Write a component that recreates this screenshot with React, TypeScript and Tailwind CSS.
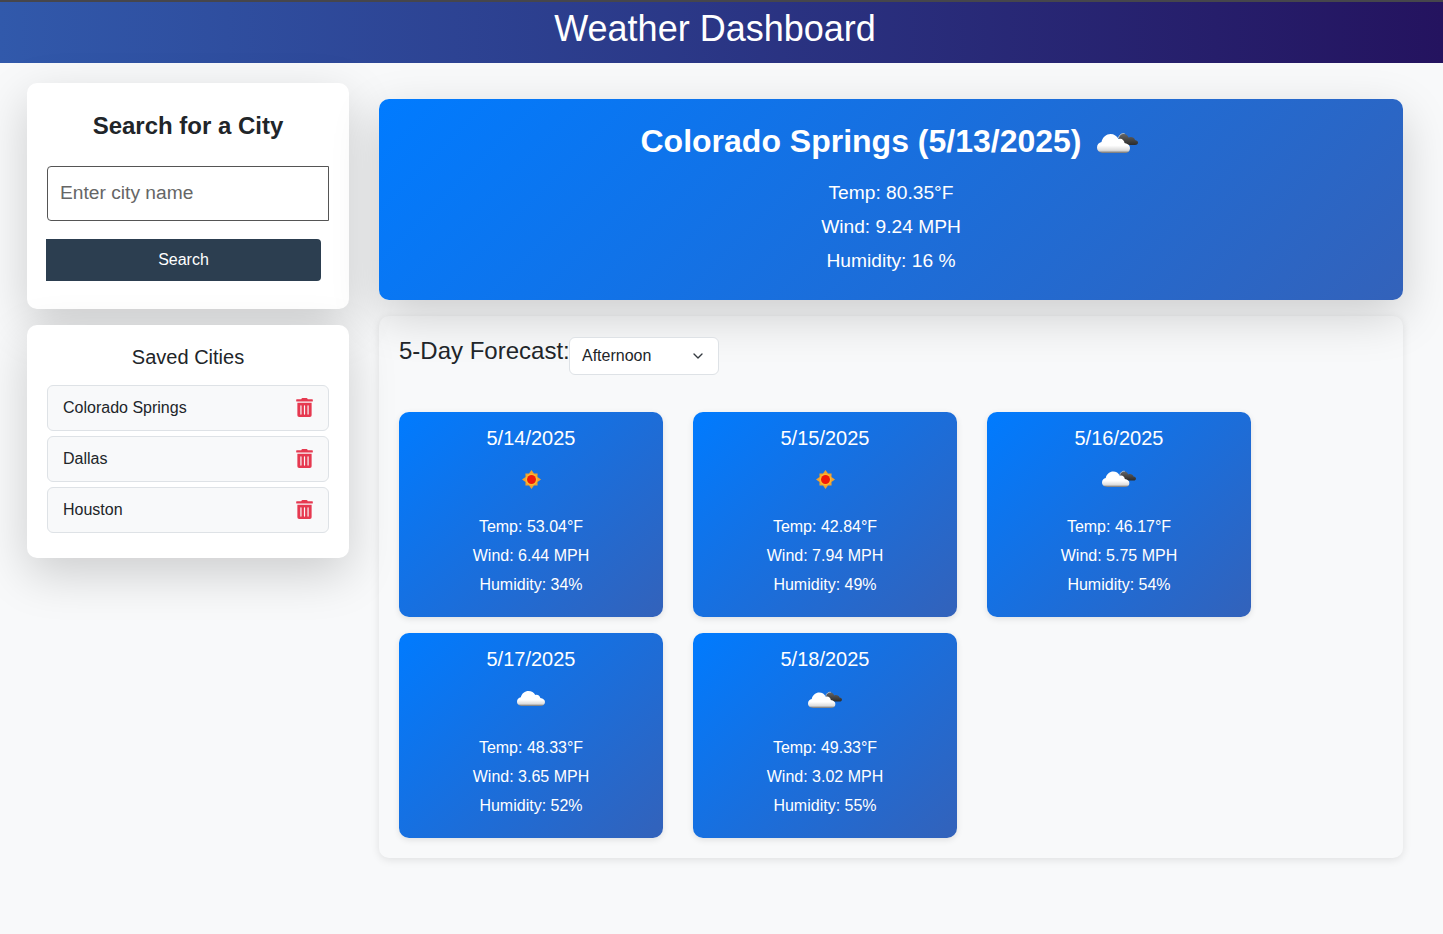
import { FaTrashAlt } from "react-icons/fa"
import { ChevronDown } from "lucide-react"

const Sun = () => (
  <svg width={19} height={19} viewBox="0 0 20 20">
    <polygon
      points="10,0 12.6,3.7 16.4,3.6 16.3,7.4 20,10 16.3,12.6 16.4,16.4 12.6,16.3 10,20 7.4,16.3 3.6,16.4 3.7,12.6 0,10 3.7,7.4 3.6,3.6 7.4,3.7"
      fill="#f0a030"
    />
    <circle cx="10" cy="10" r="6.2" fill="#fbb92f" />
    <circle cx="10" cy="10" r="4.7" fill="#f0190a" />
  </svg>
)

const WHITE_CLOUD =
  "M6.5 21C2.5 21 0 18.5 0 15.5C0 12.5 2 10.5 4.5 10C5.5 5 9.5 2 13.5 2C17 2 20 4 21.5 7C23 6.5 25 6.7 26 8C27 9 27.5 10 27.5 11C31 11.5 33 13.5 33 16C33 19 31 21 28 21Z"

const CloudGradients = () => (
  <defs>
    <linearGradient id="cloudFill" x1="0" y1="0" x2="0" y2="1">
      <stop offset="0.6" stopColor="#ffffff" />
      <stop offset="0.86" stopColor="#dcdcdc" />
      <stop offset="1" stopColor="#6f6f6f" />
    </linearGradient>
    <linearGradient id="darkFill" x1="0" y1="0" x2="0" y2="1">
      <stop offset="0" stopColor="#666666" />
      <stop offset="1" stopColor="#2b2b2b" />
    </linearGradient>
  </defs>
)

// plain white cloud, the 03d icon
const Cloud = () => (
  <svg width={28} height={15} viewBox="0 2 33 19" preserveAspectRatio="none" className="mb-[4px]">
    <CloudGradients />
    <path d={WHITE_CLOUD} fill="url(#cloudFill)" />
  </svg>
)

// white cloud with the dark one behind, the 04d icon
const BrokenCloud = ({ w = 34, h = 17, className = "" }: { w?: number; h?: number; className?: string }) => (
  <svg width={w} height={h} viewBox="0 0 41 21" preserveAspectRatio="none" className={className}>
    <CloudGradients />
    <path d="M22 13V6C22 3 25 1 28 2C30 3 31 4 31.5 5.5C34 4 37.5 5.5 38 8C40 8.3 41 9.5 41 10.5C41 12 40 13 38 13Z" fill="url(#darkFill)" />
    <path d="M21.5 6C22 3 25 1 27.5 1.6" fill="none" stroke="#c8c8c8" strokeWidth="1" />
    <path d={WHITE_CLOUD} fill="url(#cloudFill)" />
  </svg>
)

const data = [
  { date: "5/14/2025", icon: <Sun />, temp: "53.04", wind: "6.44", hum: "34" },
  { date: "5/15/2025", icon: <Sun />, temp: "42.84", wind: "7.94", hum: "49" },
  { date: "5/16/2025", icon: <BrokenCloud className="mb-px" />, temp: "46.17", wind: "5.75", hum: "54" },
  { date: "5/17/2025", icon: <Cloud />, temp: "48.33", wind: "3.65", hum: "52" },
  { date: "5/18/2025", icon: <BrokenCloud className="mb-px" />, temp: "49.33", wind: "3.02", hum: "55" },
]

const cities = ["Colorado Springs", "Dallas", "Houston"]

const App = () => {
  return (
    <div className="min-h-[934px] bg-[#f8f9fa] font-['Liberation_Sans',Arial,sans-serif] text-[#212529]">
      <header className="h-[63px] border-t-2 border-[#46464c] bg-[linear-gradient(90deg,#3159ab,#24135f)] text-center text-[36px] leading-[54px] text-white">
        <span className="relative right-[6.5px]">Weather Dashboard</span>
      </header>
      <div className="flex gap-[30px] pl-[27px] pr-[40px]">
        <aside className="flex w-[322px] shrink-0 flex-col gap-4 pt-5">
          <div className="h-[226px] rounded-[10px] bg-white px-5 pt-[27px] shadow-[0_16px_48px_rgba(0,0,0,0.175)]">
            <h2 className="text-center text-[24px] font-bold leading-[32px]">Search for a City</h2>
            <input
              placeholder="Enter city name"
              className="mt-[24px] h-[55px] w-full rounded-l-[4px] border border-[#555555] px-3 pb-[2px] text-[19.2px] outline-none placeholder:text-[#666666]"
            />
            <button className="-ml-px mt-[18px] block h-[42px] w-[275px] rounded-r-[4px] bg-[#2c3e50] text-center text-[16px] text-white">
              Search
            </button>
          </div>
          <div className="h-[233px] rounded-[10px] bg-white px-5 pt-[20px] shadow-[0_16px_48px_rgba(0,0,0,0.175)]">
            <h3 className="text-center text-[20px] leading-[24px]">Saved Cities</h3>
            <ul className="mt-4 flex flex-col gap-[5px]">
              {cities.map((city) => (
                <li key={city} className="flex h-[46px] items-center justify-between rounded-[6px] border border-[#dee2e6] bg-[#f8f9fa] pl-[15px] pr-[15px] text-[16px]">
                  <span>{city}</span>
                  <FaTrashAlt className="mb-[2px] h-[19px] w-[17px] text-[#e63950]" />
                </li>
              ))}
            </ul>
          </div>
        </aside>
        <main className="min-w-0 flex-1 pt-9 pb-[76px]">
          <section className="h-[201px] rounded-[10px] bg-[linear-gradient(135deg,#007bff,#3362ba)] pt-[19px] text-center text-white shadow-[0_16px_48px_rgba(0,0,0,0.175)]">
            <div className="flex h-[46px] items-center justify-center gap-[15px]">
              <h2 className="text-[32px] font-bold leading-[46px]">Colorado Springs (5/13/2025)</h2>
              <BrokenCloud w={41} h={21} className="mr-[4px] mt-[3px]" />
            </div>
            <div className="mt-[12px] flex flex-col text-[19.2px] leading-[34px]">
              <p>Temp: 80.35°F</p>
              <p>Wind: 9.24 MPH</p>
              <p>Humidity: 16 %</p>
            </div>
          </section>
          <section className="mt-4 h-[542px] rounded-[10px] p-5 shadow-[0_2px_8px_rgba(0,0,0,0.1)]">
            <div className="flex h-[59px] items-start">
              <h3 className="w-[170px] shrink-0 text-[24px] leading-[29px] whitespace-nowrap">5-Day Forecast:</h3>
              <div className="mt-px flex h-[38px] w-[150px] items-center justify-between rounded-[6px] border border-[#dee2e6] bg-white pl-3 pr-[12px] text-[16px] leading-6">
                <span>Afternoon</span>
                <ChevronDown className="h-4 w-4 text-[#343a40]" strokeWidth={2} />
              </div>
            </div>
            <div className="mt-[17px] grid grid-cols-[repeat(3,264px)] gap-x-[30px] gap-y-4">
              {data.map((day) => (
                <div key={day.date} className="flex h-[205px] flex-col items-center rounded-[10px] bg-[linear-gradient(135deg,#007bff,#3362ba)] pt-[14px] text-white shadow-[0_2px_6px_rgba(0,0,0,0.1)]">
                  <h4 className="text-[20px] leading-6">{day.date}</h4>
                  <div className="mt-[14px] flex h-[30px] items-center justify-center">{day.icon}</div>
                  <div className="mt-[18px] flex flex-col items-center text-[16px] leading-[29px]">
                    <p>Temp: {day.temp}°F</p>
                    <p>Wind: {day.wind} MPH</p>
                    <p>Humidity: {day.hum}%</p>
                  </div>
                </div>
              ))}
            </div>
          </section>
        </main>
      </div>
    </div>
  )
}

export default App
